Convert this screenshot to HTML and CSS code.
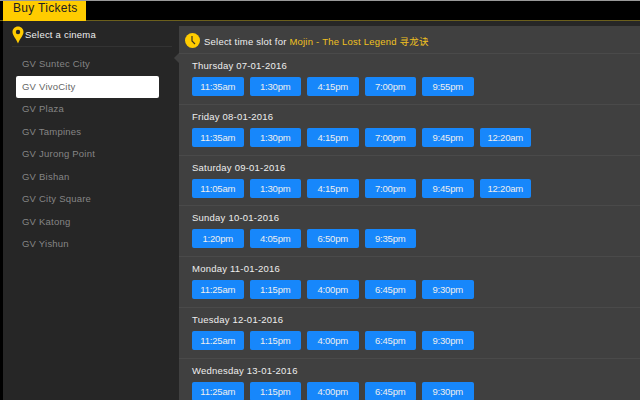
FILE: index.html
```html
<!DOCTYPE html>
<html lang="en">

<head>
    <meta charset="UTF-8">
    <meta name="viewport" content="width=device-width, initial-scale=1.0">
    <title>Buy Tickets</title>
    <link rel="stylesheet" href="styles.css">
</head>

<body>
    <div class="topbar">
        <div class="tab">Buy Tickets</div>
    </div>

    <div class="content">
        <div class="sidebar">
            <div class="sidebar-head">
                <svg class="pin" width="12" height="18" viewBox="0 0 12 18">
                    <path d="M6 0.5C2.8 0.5 0.5 2.9 0.5 6C0.5 9.5 4 12.5 6 17.5C8 12.5 11.5 9.5 11.5 6C11.5 2.9 9.2 0.5 6 0.5Z" fill="#fc0" />
                    <circle cx="6" cy="6" r="2.2" fill="#262626" />
                </svg>
                <span>Select a cinema</span>
            </div>
            <ul class="cinemas">
                <li>GV Suntec City</li>
                <li class="active">GV VivoCity</li>
                <li>GV Plaza</li>
                <li>GV Tampines</li>
                <li>GV Jurong Point</li>
                <li>GV Bishan</li>
                <li>GV City Square</li>
                <li>GV Katong</li>
                <li>GV Yishun</li>
            </ul>
        </div>

        <div class="main">
            <div class="arrow"></div>
            <div class="main-head">
                <svg class="clock" width="15" height="15" viewBox="0 0 15 15">
                    <circle cx="7.5" cy="7.5" r="7.5" fill="#fc0" />
                    <path d="M7 3V8L10 11" fill="none" stroke="#3a3320" stroke-width="1.2" />
                </svg>
                <span>Select time slot for <b class="movie">Mojin - The Lost Legend 寻龙诀</b></span>
            </div>

            <div class="day">
                <h3>Thursday 07-01-2016</h3>
                <div class="slots">
                    <button>11:35am</button>
                    <button>1:30pm</button>
                    <button>4:15pm</button>
                    <button>7:00pm</button>
                    <button>9:55pm</button>
                </div>
            </div>
            <div class="day">
                <h3>Friday 08-01-2016</h3>
                <div class="slots">
                    <button>11:35am</button>
                    <button>1:30pm</button>
                    <button>4:15pm</button>
                    <button>7:00pm</button>
                    <button>9:45pm</button>
                    <button>12:20am</button>
                </div>
            </div>
            <div class="day">
                <h3>Saturday 09-01-2016</h3>
                <div class="slots">
                    <button>11:05am</button>
                    <button>1:30pm</button>
                    <button>4:15pm</button>
                    <button>7:00pm</button>
                    <button>9:45pm</button>
                    <button>12:20am</button>
                </div>
            </div>
            <div class="day">
                <h3>Sunday 10-01-2016</h3>
                <div class="slots">
                    <button>1:20pm</button>
                    <button>4:05pm</button>
                    <button>6:50pm</button>
                    <button>9:35pm</button>
                </div>
            </div>
            <div class="day">
                <h3>Monday 11-01-2016</h3>
                <div class="slots">
                    <button>11:25am</button>
                    <button>1:15pm</button>
                    <button>4:00pm</button>
                    <button>6:45pm</button>
                    <button>9:30pm</button>
                </div>
            </div>
            <div class="day">
                <h3>Tuesday 12-01-2016</h3>
                <div class="slots">
                    <button>11:25am</button>
                    <button>1:15pm</button>
                    <button>4:00pm</button>
                    <button>6:45pm</button>
                    <button>9:30pm</button>
                </div>
            </div>
            <div class="day">
                <h3>Wednesday 13-01-2016</h3>
                <div class="slots">
                    <button>11:25am</button>
                    <button>1:15pm</button>
                    <button>4:00pm</button>
                    <button>6:45pm</button>
                    <button>9:30pm</button>
                </div>
            </div>
        </div>
    </div>
</body>

</html>
```

FILE: styles.css
```css
* {
    box-sizing: border-box;
    font-family: "Liberation Sans", "Noto Sans CJK SC", sans-serif;
}

html,
body {
    height: 100%;
}

body {
    margin: 0;
    background-color: #000;
    overflow: hidden;
    border-top: 1px solid #999;
}

.topbar {
    height: 20px;
    padding-left: 3px;
    background-color: #000;
    border-bottom: 1px solid #6b5f1c;
}

.tab {
    width: 83px;
    height: 20px;
    padding-left: 10px;
    color: #222;
    background-color: #fc0;
    font-size: 12px;
    line-height: 14px;
    letter-spacing: 0.3px;
    white-space: nowrap;
}

.content {
    display: flex;
    height: 379px;
    margin-left: 3px;
    background-color: #262626;
}

.sidebar {
    flex: none;
    width: 176px;
    padding: 2px 7px 0 9px;
}

.sidebar-head {
    display: flex;
    align-items: center;
    gap: 1px;
    height: 23px;
    color: #eee;
    font-size: 9.5px;
    letter-spacing: 0.22px;
}

.cinemas {
    margin: 0;
    padding: 6px 13px 0 4px;
    list-style: none;
    border-top: 1px solid #333;
}

.cinemas li {
    height: 22.5px;
    padding-left: 6px;
    color: #858585;
    font-size: 9.5px;
    line-height: 22px;
    letter-spacing: 0.22px;
    border-radius: 2px;
}

.cinemas .active {
    color: #666;
    background-color: #fff;
}

.main {
    position: relative;
    flex: 1;
    min-width: 0;
    margin-top: 5px;
    background-color: #404040;
}

.arrow {
    position: absolute;
    left: -5px;
    top: 27px;
    border-top: 5px solid transparent;
    border-bottom: 5px solid transparent;
    border-right: 5px solid #404040;
}

.main-head {
    display: flex;
    align-items: center;
    gap: 4px;
    height: 28px;
    padding: 2px 0 0 6px;
    color: #eee;
    font-size: 9.5px;
    letter-spacing: 0.22px;
    border-bottom: 1px solid #4a4a4a;
}

.movie {
    color: #f0c020;
    font-weight: normal;
}

.day {
    height: 50.8px;
    padding: 5px 0 0 13px;
    border-bottom: 1px solid #4a4a4a;
}

h3 {
    margin: 0 0 5px 0;
    color: #eee;
    font-size: 9.5px;
    font-weight: normal;
    line-height: 13px;
    letter-spacing: 0.22px;
}

.slots {
    display: flex;
    gap: 6px;
}

button {
    width: 51.5px;
    height: 19px;
    padding: 0;
    color: #eee;
    background-color: #1787fb;
    border: none;
    border-radius: 2px;
    font-size: 9.5px;
    letter-spacing: -0.2px;
}
```
